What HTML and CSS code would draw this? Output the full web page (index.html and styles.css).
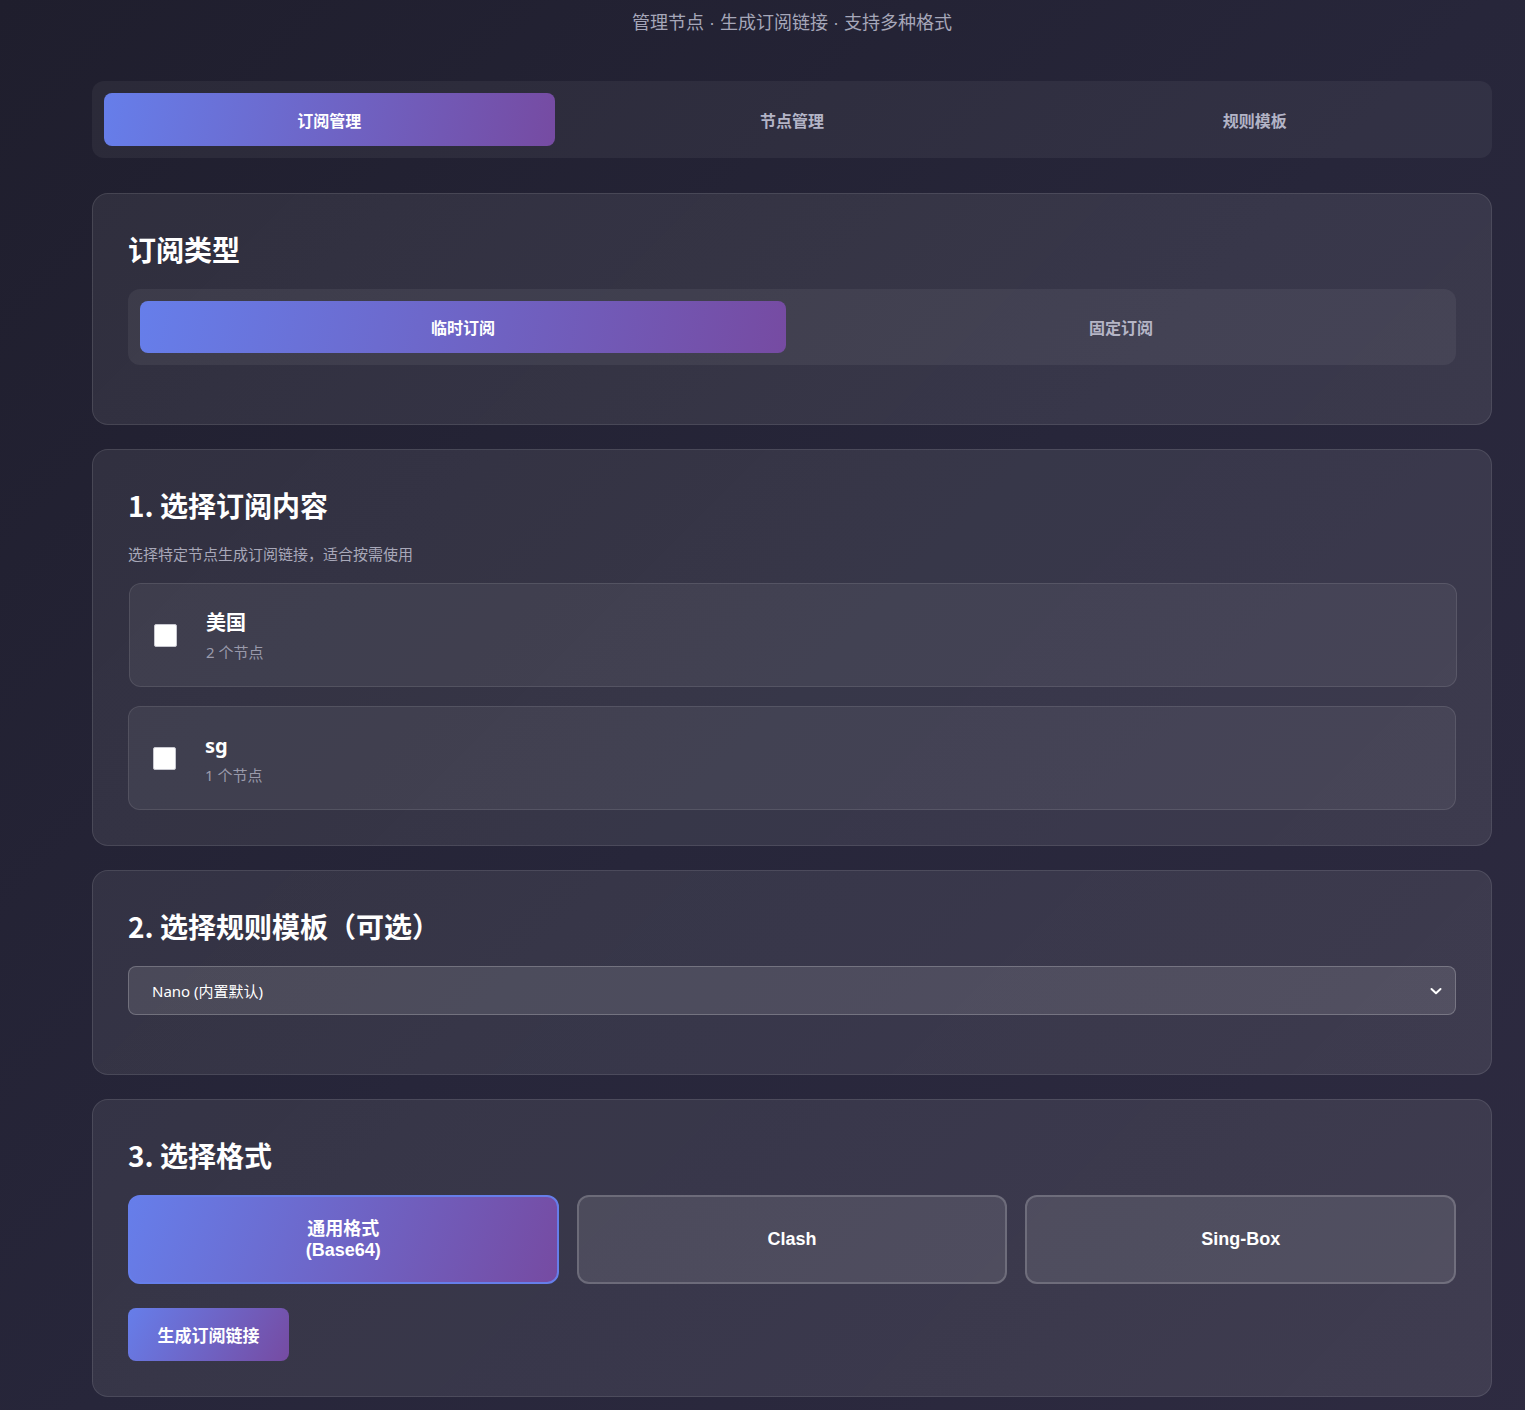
FILE: index.html
```html
<!DOCTYPE html>
<html lang="zh-CN">
<head>
<meta charset="utf-8">
<title>订阅管理</title>
<link rel="stylesheet" href="styles.css">
</head>
<body>
<div class="page">
  <p class="subtitle">管理节点 · 生成订阅链接 · 支持多种格式</p>

  <nav class="tabs">
    <button class="tab active">订阅管理</button>
    <button class="tab">节点管理</button>
    <button class="tab">规则模板</button>
  </nav>

  <section class="card">
    <h2 class="card-title">订阅类型</h2>
    <div class="segmented">
      <button class="seg active">临时订阅</button>
      <button class="seg">固定订阅</button>
    </div>
  </section>

  <section class="card card-tight">
    <h2 class="card-title">1. 选择订阅内容</h2>
    <p class="desc">选择特定节点生成订阅链接，适合按需使用</p>
    <div class="items">
      <label class="item item-shift">
        <span class="check"></span>
        <span class="item-text">
          <span class="item-name">美国</span>
          <span class="item-count">2 个节点</span>
        </span>
      </label>
      <label class="item">
        <span class="check"></span>
        <span class="item-text">
          <span class="item-name">sg</span>
          <span class="item-count">1 个节点</span>
        </span>
      </label>
    </div>
  </section>

  <section class="card">
    <h2 class="card-title">2. 选择规则模板（可选）</h2>
    <div class="select">
      <span class="select-value">Nano (内置默认)</span>
      <svg class="chev" width="14" height="14" viewBox="0 0 14 14"><path d="M2.5 5 L7 9.2 L11.5 5" fill="none" stroke="#ffffff" stroke-width="2" stroke-linecap="round" stroke-linejoin="round"/></svg>
    </div>
  </section>

  <section class="card card-tight">
    <h2 class="card-title">3. 选择格式</h2>
    <div class="formats">
      <button class="fmt active">通用格式<br>(Base64)</button>
      <button class="fmt">Clash</button>
      <button class="fmt">Sing-Box</button>
    </div>
    <button class="gen">生成订阅链接</button>
  </section>
</div>
</body>
</html>
```

FILE: styles.css
```css
* { box-sizing: border-box; }

html, body {
  margin: 0;
  padding: 0;
}

body {
  min-height: 1410px;
  background: linear-gradient(135deg, #1f1e2d 0%, #27263a 50%, #2e2b41 100%);
  font-family: "Noto Sans", "Noto Sans CJK SC", sans-serif;
  color: #ffffff;
  overflow: hidden;
}

.page {
  width: 1400px;
  margin-left: 92px;
  padding-bottom: 40px;
}

.subtitle {
  margin: 0;
  padding-top: 9px;
  height: 81px;
  text-align: center;
  font-size: 18px;
  line-height: 28px;
  color: #a6a7b9;
  font-family: "Liberation Sans", "Noto Sans CJK SC", sans-serif;
}

.tabs {
  display: flex;
  gap: 12px;
  padding: 12px;
  background: rgba(255, 255, 255, 0.05);
  border-radius: 12px;
  margin-bottom: 35px;
}

.tab {
  flex: 1;
  height: 53px;
  border: none;
  border-radius: 8px;
  background: transparent;
  color: #b3b4c6;
  font-family: "Noto Sans CJK SC", sans-serif;
  font-size: 16px;
  font-weight: 600;
  cursor: pointer;
}

.tab.active {
  background: linear-gradient(100deg, #667eea 0%, #764ba2 100%);
  color: #ffffff;
}

.card {
  background: linear-gradient(135deg, rgba(255,255,255,0.07) 0%, rgba(255,255,255,0.085) 100%);
  border: 1px solid rgba(255, 255, 255, 0.1);
  border-radius: 16px;
  padding: 35px 35px 59px;
  margin-bottom: 24px;
}

.card-tight {
  padding-bottom: 35px;
}

.card-title {
  margin: 0 0 20px;
  font-family: "Noto Sans CJK SC", sans-serif;
  font-size: 28px;
  line-height: 40px;
  font-weight: 700;
  color: #ffffff;
}

.segmented {
  display: flex;
  gap: 12px;
  padding: 12px;
  background: rgba(255, 255, 255, 0.06);
  border-radius: 12px;
}

.seg {
  flex: 1;
  height: 52px;
  border: none;
  border-radius: 8px;
  background: transparent;
  color: #b5b5c6;
  font-family: "Noto Sans CJK SC", sans-serif;
  font-size: 16px;
  font-weight: 600;
}

.seg.active {
  background: linear-gradient(100deg, #667eea 0%, #764ba2 100%);
  color: #ffffff;
}

.desc {
  margin: -2px 0 18px;
  font-family: "Noto Sans CJK SC", sans-serif;
  font-size: 15px;
  line-height: 22px;
  color: #a8a8b9;
}

.items {
  display: flex;
  flex-direction: column;
  gap: 19px;
}

.item {
  display: flex;
  align-items: center;
  gap: 29px;
  height: 104px;
  padding: 0 24px;
  background: rgba(255, 255, 255, 0.06);
  border: 1px solid rgba(255, 255, 255, 0.1);
  border-radius: 12px;
}

.item-shift {
  margin-left: 1px;
  margin-right: -1px;
}

.check {
  width: 23px;
  height: 23px;
  background: #ffffff;
  border: 1px solid #c8c8d0;
  border-radius: 2px;
  flex: none;
}

.item-text {
  display: flex;
  flex-direction: column;
  gap: 5px;
  padding-top: 2px;
}

.item-name {
  font-family: "Noto Sans", "Noto Sans CJK SC", sans-serif;
  font-size: 20px;
  line-height: 26px;
  font-weight: 700;
  color: #ffffff;
}

.item-count {
  font-family: "Noto Sans", "Noto Sans CJK SC", sans-serif;
  font-size: 15px;
  line-height: 22px;
  color: #9a9aab;
}

.select {
  display: flex;
  align-items: center;
  justify-content: space-between;
  height: 49px;
  padding: 0 12px 0 23px;
  background: rgba(255, 255, 255, 0.11);
  border: 1px solid rgba(255, 255, 255, 0.22);
  border-radius: 8px;
}

.select-value {
  font-family: "Noto Sans", "Noto Sans CJK SC", sans-serif;
  font-size: 15px;
  color: #ffffff;
}

.chev {
  display: block;
}

.formats {
  display: grid;
  grid-template-columns: repeat(3, 1fr);
  gap: 18px;
  margin-bottom: 24px;
}

.fmt {
  height: 89px;
  border-radius: 12px;
  border: 2px solid rgba(255, 255, 255, 0.18);
  background: rgba(255, 255, 255, 0.1);
  color: #ffffff;
  font-family: "Liberation Sans", "Noto Sans CJK SC", sans-serif;
  font-size: 18px;
  line-height: 21px;
  font-weight: 700;
}

.fmt.active {
  background: linear-gradient(110deg, #667eea 0%, #764ba2 100%);
  border-color: #667eea;
}

.gen {
  display: block;
  width: 161px;
  height: 53px;
  border: none;
  border-radius: 8px;
  background: linear-gradient(120deg, #667eea 0%, #764ba2 100%);
  color: #ffffff;
  font-family: "Liberation Sans", "Noto Sans CJK SC", sans-serif;
  font-size: 17px;
  font-weight: 700;
}
```
